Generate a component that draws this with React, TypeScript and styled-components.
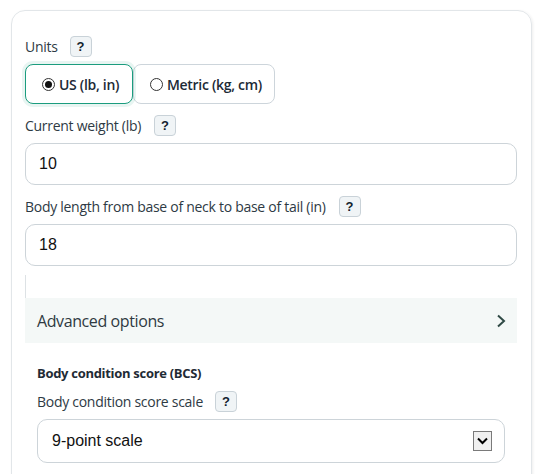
import React from "react";
import styled, { createGlobalStyle } from "styled-components";

const Global = createGlobalStyle`
  html, body { margin: 0; padding: 0; background: #ffffff; }
  body { font-family: "Open Sans", "Noto Sans", sans-serif; color: #2b3640; }
  * { box-sizing: border-box; }
`;

const Page = styled.div`
  padding: 10px 0 0 11px;
  width: 542px;
  height: 474px;
  overflow: hidden;
`;

const Card = styled.div`
  width: 521px;
  min-height: 520px;
  border: 1px solid #e2e6e9;
  border-radius: 14px;
  box-shadow: 1px 1px 3px rgba(0, 0, 0, 0.07);
  padding: 25px 13px 0 13px;
  display: flex;
  flex-direction: column;
`;

const LabelRow = styled.div<{ $gap?: number }>`
  display: flex;
  align-items: center;
  gap: ${(p) => p.$gap ?? 12}px;
  height: 21px;
  font-size: 14px;
  letter-spacing: -0.28px;
  color: #2e3a44;
`;

const Help = styled.span`
  width: 22px;
  height: 21px;
  border: 1px solid #c9d2d8;
  background: #f0f4f6;
  border-radius: 4px;
  display: inline-flex;
  align-items: center;
  justify-content: center;
  font-family: "Liberation Sans", Arial, sans-serif;
  font-weight: 700;
  font-size: 13px;
  letter-spacing: 0;
  color: #13222e;
`;

const RadioGroup = styled.div`
  display: flex;
  margin-top: 7px;
  margin-bottom: 11px;
`;

const RadioBox = styled.div<{ $active?: boolean; $w: number }>`
  width: ${(p) => p.$w}px;
  height: 40px;
  border: 1px solid ${(p) => (p.$active ? "#1b9c7e" : "#cdd5db")};
  box-shadow: ${(p) => (p.$active ? "0 0 0 3px rgba(27,156,126,0.10)" : "none")};
  border-radius: 8px;
  display: flex;
  align-items: center;
  padding-left: 16px;
  gap: 4px;
  font-size: 14px;
  font-weight: 600;
  letter-spacing: -0.3px;
  color: #1c2a36;
  background: #fff;
  position: relative;
  z-index: ${(p) => (p.$active ? 1 : 0)};
`;

const Dot = styled.span<{ $on?: boolean }>`
  width: 13px;
  height: 13px;
  border-radius: 50%;
  border: 1px solid #333;
  display: inline-flex;
  align-items: center;
  justify-content: center;
  &::after {
    content: "";
    width: 7px;
    height: 7px;
    border-radius: 50%;
    background: ${(p) => (p.$on ? "#111" : "transparent")};
  }
`;

const Input = styled.div<{ $mb?: number }>`
  margin-top: 7px;
  margin-bottom: ${(p) => p.$mb ?? 11}px;
  width: 492px;
  height: 42px;
  border: 1px solid #cdd4d9;
  border-radius: 10px;
  display: flex;
  align-items: center;
  padding-left: 13px;
  font-family: "Liberation Sans", Arial, sans-serif;
  font-size: 16px;
  color: #111;
`;

const Spacer = styled.div`
  height: 23px;
  border-left: 1px solid #dde2e5;
`;

const Accordion = styled.div`
  width: 492px;
  height: 45px;
  background: #f4f8f7;
  display: flex;
  align-items: center;
  justify-content: space-between;
  padding: 0 11px 0 12px;
  font-size: 16px;
  letter-spacing: -0.4px;
  color: #2f3a42;
`;

const Section = styled.div`
  padding: 21px 0 0 12px;
  display: flex;
  flex-direction: column;
`;

const SubHeading = styled.div`
  font-size: 13px;
  font-weight: 700;
  letter-spacing: -0.3px;
  color: #1f2b35;
  height: 18px;
  line-height: 18px;
  margin-bottom: 9px;
`;

const Select = styled.div`
  margin-top: 7px;
  width: 468px;
  height: 44px;
  border: 1px solid #cdd4d9;
  border-radius: 10px;
  display: flex;
  align-items: center;
  justify-content: space-between;
  padding: 0 12px 0 14px;
  font-family: "Liberation Sans", Arial, sans-serif;
  font-size: 16px;
  color: #111;
`;

const ArrowBox = styled.span`
  width: 19px;
  height: 20px;
  border: 1px solid #7a7a7a;
  background: #f0f0f0;
  display: inline-flex;
  align-items: center;
  justify-content: center;
`;

export default function App() {
  return (
    <>
      <Global />
      <Page>
        <Card>
          <LabelRow>
            <span>Units</span>
            <Help>?</Help>
          </LabelRow>
          <RadioGroup>
            <RadioBox $active $w={108}>
              <Dot $on />
              <span>US (lb, in)</span>
            </RadioBox>
            <RadioBox $w={142}>
              <Dot />
              <span>Metric (kg, cm)</span>
            </RadioBox>
          </RadioGroup>
          <LabelRow $gap={13}>
            <span>Current weight (lb)</span>
            <Help>?</Help>
          </LabelRow>
          <Input>10</Input>
          <LabelRow $gap={13}>
            <span>Body length from base of neck to base of tail (in)</span>
            <Help>?</Help>
          </LabelRow>
          <Input $mb={9}>18</Input>
          <Spacer />
          <Accordion>
            <span>Advanced options</span>
            <svg width="10" height="14" viewBox="0 0 10 14">
              <path d="M2 1.5 L8 7 L2 12.5" fill="none" stroke="#2f4a45" strokeWidth="2" />
            </svg>
          </Accordion>
          <Section>
            <SubHeading>Body condition score (BCS)</SubHeading>
            <LabelRow>
              <span>Body condition score scale</span>
              <Help>?</Help>
            </LabelRow>
            <Select>
              <span>9-point scale</span>
              <ArrowBox>
                <svg width="11" height="8" viewBox="0 0 11 8">
                  <path d="M1 1.5 L5.5 6 L10 1.5" fill="none" stroke="#000" strokeWidth="2" />
                </svg>
              </ArrowBox>
            </Select>
          </Section>
        </Card>
      </Page>
    </>
  );
}
